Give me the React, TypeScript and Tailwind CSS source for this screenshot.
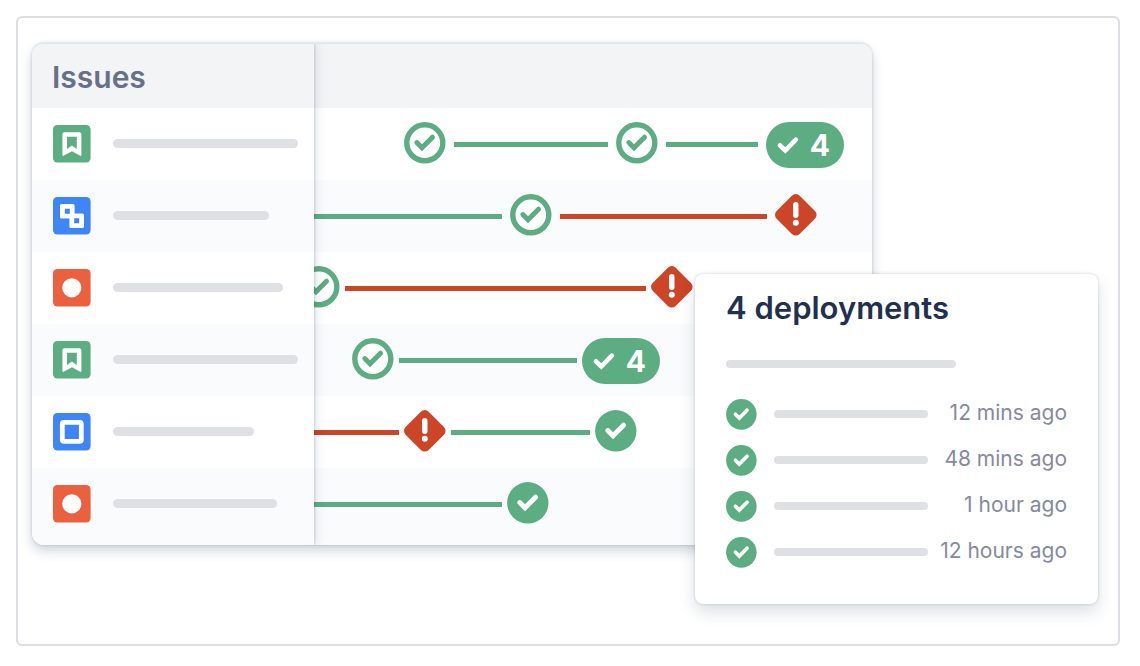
import React from "react";

type IssueKind = "story" | "subtask" | "bug" | "task";
type Step =
  | { type: "ring" | "solid" | "alert"; offset?: string }
  | { type: "count"; value: number }
  | { type: "line"; className: string };

interface Issue {
  kind: IssueKind;
  bar: string;
  track: string;
  steps: Step[];
}

const GREEN_LINE = "bg-[#5cad81]";
const RED_LINE = "bg-[#cb4526]";

const issues: Issue[] = [
  {
    kind: "story",
    bar: "w-[185px]",
    track: "gap-2 pl-[90px] pr-7",
    steps: [
      { type: "ring" },
      { type: "line", className: `${GREEN_LINE} grow-[153]` },
      { type: "ring" },
      { type: "line", className: `${GREEN_LINE} grow-[92]` },
      { type: "count", value: 4 },
    ],
  },
  {
    kind: "subtask",
    bar: "w-[156px]",
    track: "gap-2 pr-[55px]",
    steps: [
      { type: "line", className: `${GREEN_LINE} grow-[188]` },
      { type: "ring" },
      { type: "line", className: `${RED_LINE} grow-[208]` },
      { type: "alert" },
    ],
  },
  {
    kind: "bug",
    bar: "w-[170px]",
    track: "gap-[5px] pr-[179px]",
    steps: [
      { type: "ring", offset: "-ml-4" },
      { type: "line", className: `${RED_LINE} grow` },
      { type: "alert" },
    ],
  },
  {
    kind: "story",
    bar: "w-[185px]",
    track: "gap-[5px] pl-[38px] pr-[212px]",
    steps: [
      { type: "ring" },
      { type: "line", className: `${GREEN_LINE} grow` },
      { type: "count", value: 4 },
    ],
  },
  {
    kind: "task",
    bar: "w-[141px]",
    track: "gap-[5px] pr-[235px]",
    steps: [
      { type: "line", className: `${RED_LINE} grow-[85]` },
      { type: "alert" },
      { type: "line", className: `${GREEN_LINE} grow-[139]` },
      { type: "solid" },
    ],
  },
  {
    kind: "bug",
    bar: "w-[164px]",
    track: "gap-[5px] pr-[323px]",
    steps: [
      { type: "line", className: `${GREEN_LINE} grow` },
      { type: "solid" },
    ],
  },
];

const deployments = ["12 mins ago", "48 mins ago", "1 hour ago", "12 hours ago"];

const ROW = "flex h-[72px] items-start odd:bg-white even:bg-[#fafbfd] last:h-[77px]";

function IssueIcon({ kind }: { kind: IssueKind }) {
  const fill = { story: "#5cad81", subtask: "#3e85f7", bug: "#eb603f", task: "#3e85f7" }[kind];
  return (
    <svg className="size-[38px] shrink-0" viewBox="0 0 38 38" aria-hidden="true">
      <rect width="37.6" height="37.6" rx="4.5" fill={fill} />
      {kind === "story" && (
        <path
          fill="#fff"
          fillRule="evenodd"
          d="M9.4 9.5a2.2 2.2 0 0 1 2.2-2.200h14.600a2.200 2.200 0 0 1 2.200 2.200v20.500c0 .8-.6 1.100-1.200.7L18.900 26.200l-8.300 4.500c-.6.4-1.200.1-1.200-.7zM14 11.800v12.300l4.900-3.700 4.900 3.700v-12.300z"
        />
      )}
      {kind === "subtask" && (
        <path
          fill="#fff"
          fillRule="evenodd"
          d="M8.600 7h11.400a1.600 1.600 0 0 1 1.600 1.600v7.800h7.800a1.600 1.600 0 0 1 1.600 1.600v11.400a1.600 1.600 0 0 1-1.600 1.600H18a1.600 1.600 0 0 1-1.600-1.600v-7.800H8.600A1.600 1.600 0 0 1 7 20V8.600A1.600 1.600 0 0 1 8.600 7zM11.800 11.800v5h5v-5zM21.200 21.200v5h5v-5z"
        />
      )}
      {kind === "bug" && <circle cx="18.800" cy="18.800" r="9.600" fill="#fff" />}
      {kind === "task" && (
        <rect x="9.300" y="9.300" width="19" height="19" rx="1.600" fill="none" stroke="#fff" strokeWidth="4.800" />
      )}
    </svg>
  );
}

function CheckCircle({ outlined = false, className }: { outlined?: boolean; className: string }) {
  return (
    <svg className={`shrink-0 ${className}`} viewBox="0 0 42 42" aria-hidden="true">
      {outlined ? (
        <circle cx="20.800" cy="20.800" r="18" fill="#fff" stroke="#5cad81" strokeWidth="5.400" />
      ) : (
        <circle cx="20.800" cy="20.800" r="20.700" fill="#5cad81" />
      )}
      <path
        d="M12.800 20.600l5.200 5.200L28.500 15.200"
        fill="none"
        stroke={outlined ? "#5cad81" : "#fff"}
        strokeWidth="5"
        strokeLinecap="round"
      />
    </svg>
  );
}

function AlertDiamond() {
  return (
    <svg className="size-[42px] shrink-0" viewBox="0 0 42 42" aria-hidden="true">
      <rect x="4.500" y="4.500" width="32.600" height="32.600" rx="5.500" transform="rotate(45 20.800 20.800)" fill="#cb4526" />
      <path d="M20.800 10.800v10.500" stroke="#fff" strokeWidth="5.400" strokeLinecap="round" />
      <circle cx="20.800" cy="28.800" r="3" fill="#fff" />
    </svg>
  );
}

function TrackStep({ step }: { step: Step }) {
  switch (step.type) {
    case "line":
      return <span className={`mt-5 h-[5px] basis-0 ${step.className}`} />;
    case "alert":
      return <AlertDiamond />;
    case "count":
      return (
        <span className="flex h-[46px] w-[78px] shrink-0 items-center justify-between rounded-full bg-[#5cad81] pl-[11px] pr-[14px] text-[30px] font-bold leading-none text-white">
          <svg className="size-[22px]" viewBox="0 0 22 22" aria-hidden="true">
            <path
              d="M3 11.300l5.300 5.200L18.800 5.600"
              fill="none"
              stroke="#fff"
              strokeWidth="4.600"
              strokeLinecap="round"
            />
          </svg>
          {step.value}
        </span>
      );
    default:
      return <CheckCircle outlined={step.type === "ring"} className={`size-[42px] ${step.offset ?? ""}`} />;
  }
}

function IssuesBoard() {
  return (
    <section className="flex overflow-hidden rounded-xl border-t border-[#e4e5e9] bg-white shadow-[0_6px_12px_rgba(23,43,77,0.2),0_0_3px_rgba(23,43,77,0.22)]">
      <div className="relative z-10 w-[282px] shrink-0 shadow-[1px_0_2px_rgba(23,43,77,0.14),2px_0_10px_rgba(23,43,77,0.13)]">
        <h2 className="flex h-16 items-center bg-[#f3f4f6] pl-5 pt-0.5 text-[30px] font-semibold text-[#667089]">
          Issues
        </h2>
        <ul>
          {issues.map((issue, i) => (
            <li key={i} className={`${ROW} gap-[22px] pl-[21px] pt-[17px]`}>
              <IssueIcon kind={issue.kind} />
              <span className={`mt-[14px] h-[9px] rounded-full bg-[#dfe0e3] ${issue.bar}`} />
            </li>
          ))}
        </ul>
      </div>
      <div className="min-w-0 flex-1">
        <div className="h-16 bg-[#f3f4f6]" />
        <ul>
          {issues.map((issue, i) => (
            <li key={i} className={`${ROW} pt-[14px] ${issue.track}`}>
              {issue.steps.map((step, j) => (
                <TrackStep key={j} step={step} />
              ))}
            </li>
          ))}
        </ul>
      </div>
    </section>
  );
}

function DeploymentsPopup() {
  return (
    <aside className="absolute bottom-10 right-5 z-20 w-[403px] rounded-lg bg-white px-[31px] pb-[29px] pt-[14px] shadow-[0_8px_16px_rgba(23,43,77,0.15),0_0_3px_rgba(23,43,77,0.2)]">
      <h2 className="text-[31px] font-semibold leading-10 text-[#1f3050]">4 deployments</h2>
      <div className="mt-8 h-2 w-[230px] rounded-full bg-[#dfe0e3]" />
      <ul className="mt-[23px]">
        {deployments.map((time) => (
          <li key={time} className="flex h-[46px] items-center">
            <CheckCircle className="size-[31px]" />
            <span className="ml-[17px] h-2 w-[154px] rounded-full bg-[#dfe0e3]" />
            <time className="ml-auto whitespace-nowrap pb-0.5 text-[21px] leading-8 text-[#858a9e]">{time}</time>
          </li>
        ))}
      </ul>
    </aside>
  );
}

export default function App() {
  return (
    <main className="bg-white pb-5 pl-4 pr-5 pt-4 font-[Inter,sans-serif]">
      <div className="relative rounded-md border-2 border-[#dddee5] pb-[99px] pl-[14px] pr-[246px] pt-[25px]">
        <IssuesBoard />
        <DeploymentsPopup />
      </div>
    </main>
  );
}
